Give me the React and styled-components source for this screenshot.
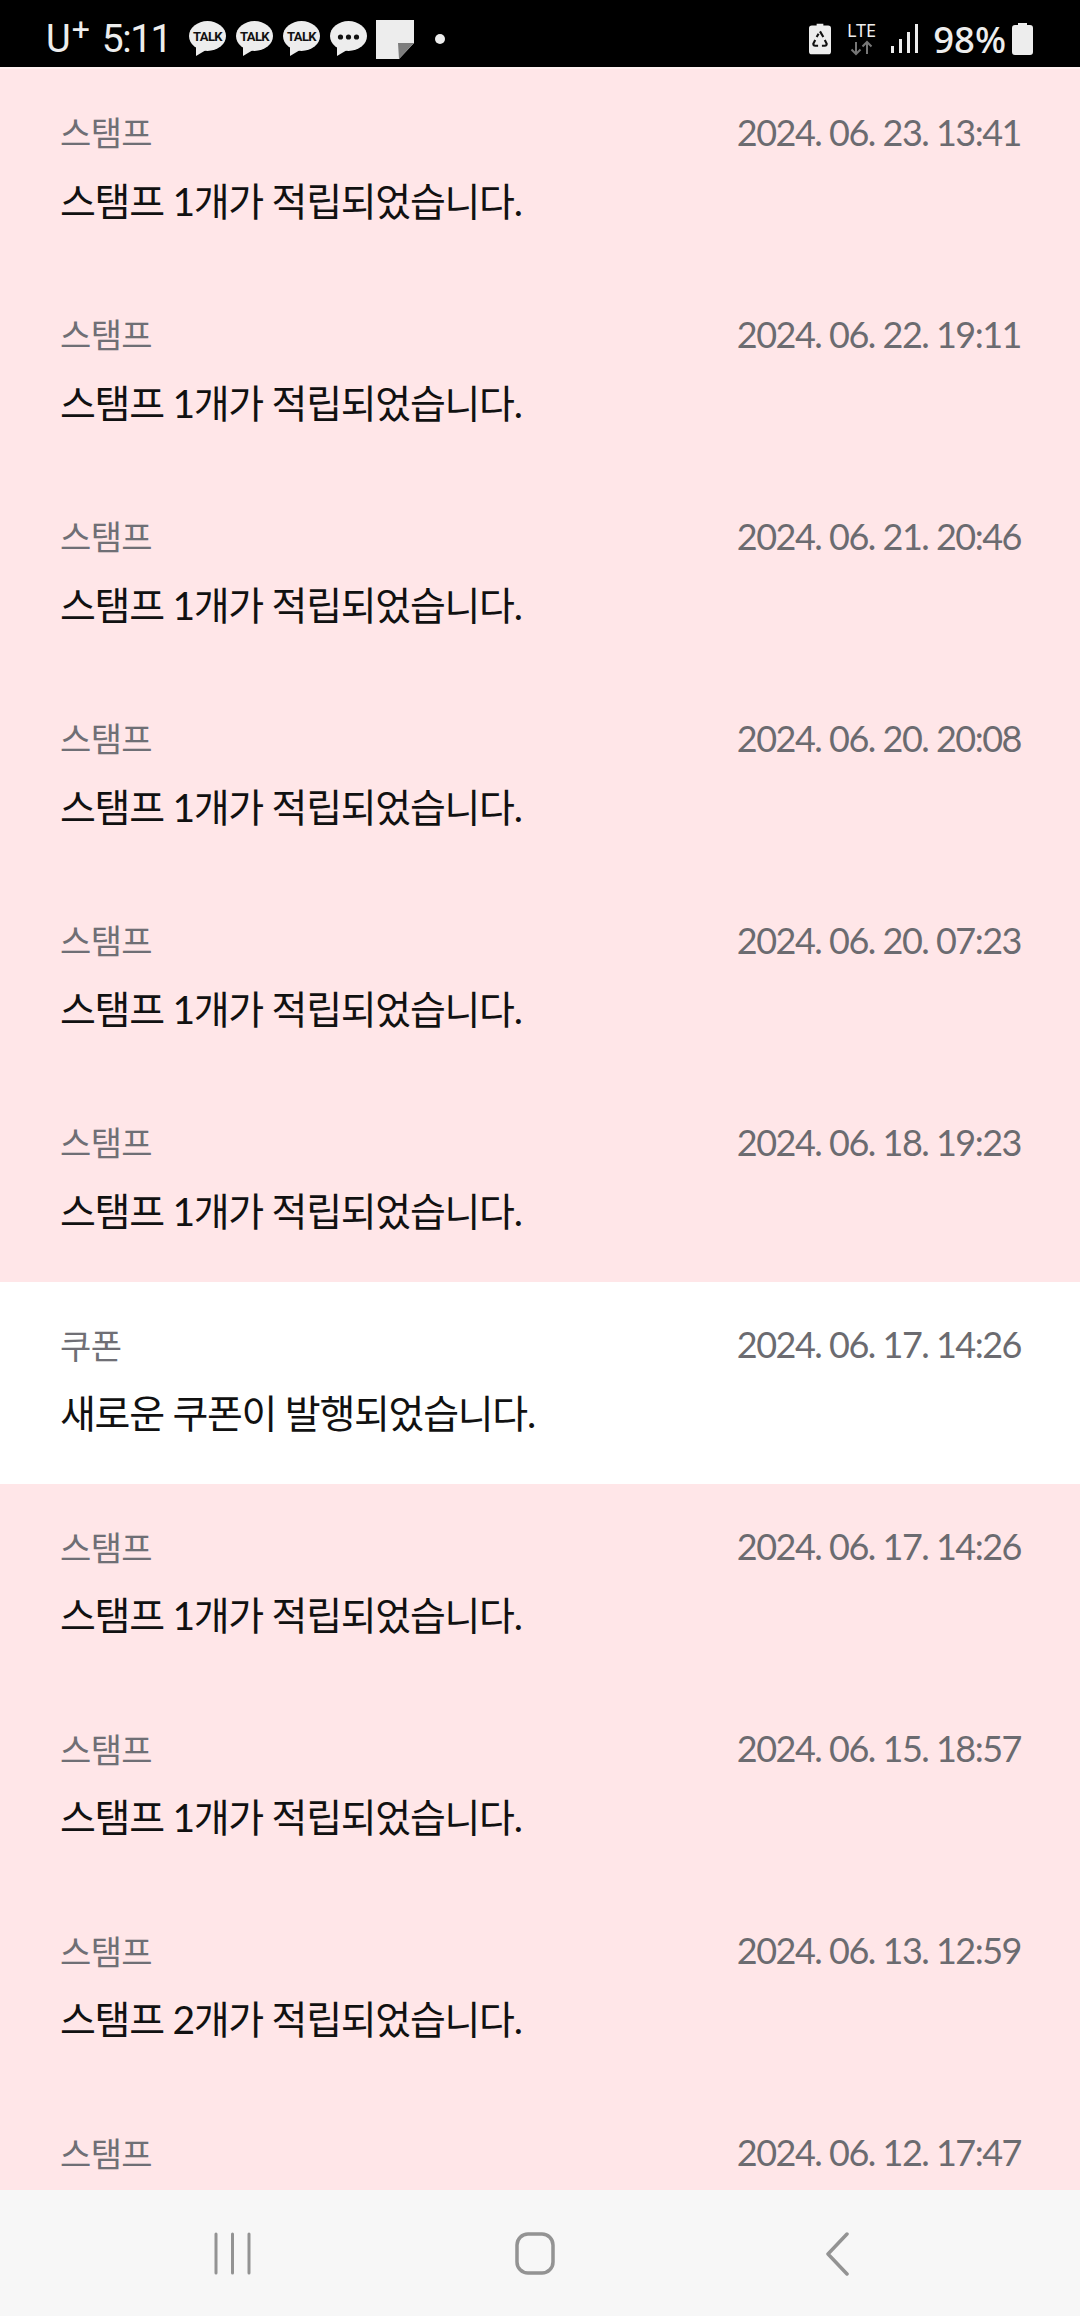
import styled, { createGlobalStyle } from "styled-components";

const GlobalStyle = createGlobalStyle`
  html, body {
    margin: 0;
    padding: 0;
    background: #fff;
  }
`;

const Screen = styled.div`
  width: 1080px;
  height: 2316px;
  display: flex;
  flex-direction: column;
  overflow: hidden;
  font-family: Lato, "Noto Sans CJK KR", sans-serif;
`;

const StatusBar = styled.div`
  flex: 0 0 67px;
  box-sizing: border-box;
  background: #000;
  color: #ededed;
  display: flex;
  align-items: center;
  justify-content: space-between;
  padding: 11px 47px 0 46px;
  font-family: Roboto, sans-serif;
`;

const StatusGroup = styled.div`
  display: flex;
  align-items: center;
`;

const Carrier = styled.span`
  font-size: 38px;
  line-height: 40px;
`;

const Plus = styled.sup`
  font-size: 32px;
  line-height: 0;
  margin-left: 1px;
  vertical-align: 12px;
`;

const Clock = styled.span`
  font-size: 39px;
  line-height: 40px;
  letter-spacing: -1.5px;
  margin: 0 18px 0 12px;
`;

const Percent = styled.span`
  font-size: 36.5px;
  line-height: 40px;
  font-weight: 500;
  font-family: "Noto Sans", sans-serif;
  margin: 0 6px 0 15px;
`;

const List = styled.div`
  flex: 1;
  min-height: 0;
  overflow: hidden;
  border-top: 2px solid #fff0f1;
`;

const Row = styled.div`
  height: 202.1px;
  box-sizing: border-box;
  padding: 40.5px 59px 0 60px;
  background: ${(props) => (props.$read ? "#ffffff" : "#ffe6e8")};
`;

const RowHead = styled.div`
  display: flex;
  justify-content: space-between;
  align-items: center;
  height: 44px;
`;

const Kind = styled.span`
  font-size: 34px;
  color: #6f6f75;
  letter-spacing: -0.6px;
`;

const When = styled.span`
  font-size: 36px;
  color: #6b6b70;
  letter-spacing: -1.5px;
`;

const Message = styled.div`
  margin-top: 21px;
  font-size: 39px;
  line-height: 52px;
  color: #111;
  letter-spacing: -1.3px;
`;

const NavBar = styled.div`
  flex: 0 0 126px;
  background: #f7f7f7;
  display: flex;
  align-items: center;
  color: #939393;
`;

const NavSlot = styled.div`
  height: 44px;
  width: ${(props) => props.$w}px;
  margin-left: ${(props) => props.$ml}px;
  margin-top: 2px;
`;

const items = [
  ["스탬프", "2024. 06. 23. 13:41", "스탬프 1개가 적립되었습니다."],
  ["스탬프", "2024. 06. 22. 19:11", "스탬프 1개가 적립되었습니다."],
  ["스탬프", "2024. 06. 21. 20:46", "스탬프 1개가 적립되었습니다."],
  ["스탬프", "2024. 06. 20. 20:08", "스탬프 1개가 적립되었습니다."],
  ["스탬프", "2024. 06. 20. 07:23", "스탬프 1개가 적립되었습니다."],
  ["스탬프", "2024. 06. 18. 19:23", "스탬프 1개가 적립되었습니다."],
  ["쿠폰", "2024. 06. 17. 14:26", "새로운 쿠폰이 발행되었습니다.", true],
  ["스탬프", "2024. 06. 17. 14:26", "스탬프 1개가 적립되었습니다."],
  ["스탬프", "2024. 06. 15. 18:57", "스탬프 1개가 적립되었습니다."],
  ["스탬프", "2024. 06. 13. 12:59", "스탬프 2개가 적립되었습니다."],
  // last row runs under the nav bar, only its head is visible
  ["스탬프", "2024. 06. 12. 17:47", null],
];

function TalkBubble({ dots }) {
  return (
    <svg width="37" height="36" viewBox="0 0 37 36" style={{ marginRight: 10 }}>
      <ellipse cx="18.5" cy="15" rx="18.5" ry="15" fill="#ededed" />
      <path d="M7 25 L7 35 L17 29 Z" fill="#ededed" />
      {dots ? (
        <g fill="#111">
          <circle cx="10.5" cy="16" r="2.6" />
          <circle cx="18.5" cy="16" r="2.6" />
          <circle cx="26.5" cy="16" r="2.6" />
        </g>
      ) : (
        <text
          x="18.5"
          y="20"
          textAnchor="middle"
          fontFamily="Roboto, sans-serif"
          fontWeight="700"
          fontSize="13"
          letterSpacing="-0.6"
          fill="#111"
        >
          TALK
        </text>
      )}
    </svg>
  );
}

function Note() {
  return (
    <svg width="38" height="39" viewBox="0 0 38 39" style={{ marginLeft: -1 }}>
      <path d="M0 0 H38 V23 L23 39 H0 Z" fill="#ededed" />
      <path d="M22 23 H38 L23 39 Z" fill="#7d7d7d" />
    </svg>
  );
}

function RecycleBattery() {
  return (
    <svg width="22" height="32" viewBox="0 0 23 32" style={{ marginRight: 16 }}>
      <path
        d="M8 0 H15 V2 H20 Q23 2 23 5 V29 Q23 32 20 32 H3 Q0 32 0 29 V5 Q0 2 3 2 H8 Z"
        fill="#ededed"
      />
      <path
        d="M11.5 8 L15 14 M8 14 L10 10.5 M6.5 17 L4.5 21 Q4.5 23 6.5 23 H9.5 M13.5 23 H16.5 Q18.5 23 18.5 21 L16.5 17"
        stroke="#111"
        strokeWidth="2.2"
        fill="none"
      />
    </svg>
  );
}

function LteSignal() {
  return (
    <svg width="71" height="40" viewBox="0 -4 71 40">
      <text x="0" y="14" fontFamily="Noto Sans, sans-serif" fontSize="18" fill="#ededed">
        LTE
      </text>
      <path
        d="M9 19 V31 M4.5 26.5 L9 31 L13.5 26.5 M20 31 V19 M15.5 23.5 L20 19 L24.5 23.5"
        stroke="#777"
        strokeWidth="2"
        fill="none"
      />
      <g fill="#ededed">
        <rect x="44" y="23" width="3" height="7" />
        <rect x="52" y="16" width="3" height="14" />
        <rect x="60" y="9" width="3" height="21" />
        <rect x="68" y="1" width="3" height="29" />
      </g>
    </svg>
  );
}

function Battery() {
  return (
    <svg width="21" height="32" viewBox="0 0 21 32">
      <path
        d="M6 0 H15 V2 H18 Q21 2 21 5 V29 Q21 32 18 32 H3 Q0 32 0 29 V5 Q0 2 3 2 H6 Z"
        fill="#ededed"
      />
    </svg>
  );
}

function App() {
  return (
    <Screen>
      <GlobalStyle />
      <StatusBar>
        <StatusGroup>
          <Carrier>
            U<Plus>+</Plus>
          </Carrier>
          <Clock>5:11</Clock>
          <TalkBubble />
          <TalkBubble />
          <TalkBubble />
          <TalkBubble dots />
          <Note />
          <svg width="10" height="10" style={{ marginLeft: 21 }}>
            <circle cx="5" cy="5" r="5" fill="#ededed" />
          </svg>
        </StatusGroup>
        <StatusGroup>
          <RecycleBattery />
          <LteSignal />
          <Percent>98%</Percent>
          <Battery />
        </StatusGroup>
      </StatusBar>

      <List>
        {items.map(([kind, when, text, read], i) => (
          <Row key={i} $read={read}>
            <RowHead>
              <Kind>{kind}</Kind>
              <When>{when}</When>
            </RowHead>
            {text && <Message>{text}</Message>}
          </Row>
        ))}
      </List>

      <NavBar>
        <NavSlot $w={40} $ml={213}>
          <svg width="40" height="44" viewBox="0 0 40 44">
            <path
              d="M3 2 V41 M19.5 2 V41 M36 2 V41"
              stroke="currentColor"
              strokeWidth="3"
              strokeLinecap="round"
            />
          </svg>
        </NavSlot>
        <NavSlot $w={40} $ml={262}>
          <svg width="40" height="44" viewBox="0 0 40 44">
            <rect x="2" y="2" width="36" height="39" rx="11" fill="none" stroke="currentColor" strokeWidth="3.5" />
          </svg>
        </NavSlot>
        <NavSlot $w={26} $ml={269}>
          <svg width="26" height="44" viewBox="0 0 26 44">
            <path
              d="M23 2 L4 22 L23 42"
              fill="none"
              stroke="currentColor"
              strokeWidth="3.5"
              strokeLinecap="round"
              strokeLinejoin="round"
            />
          </svg>
        </NavSlot>
      </NavBar>
    </Screen>
  );
}

export default App;
